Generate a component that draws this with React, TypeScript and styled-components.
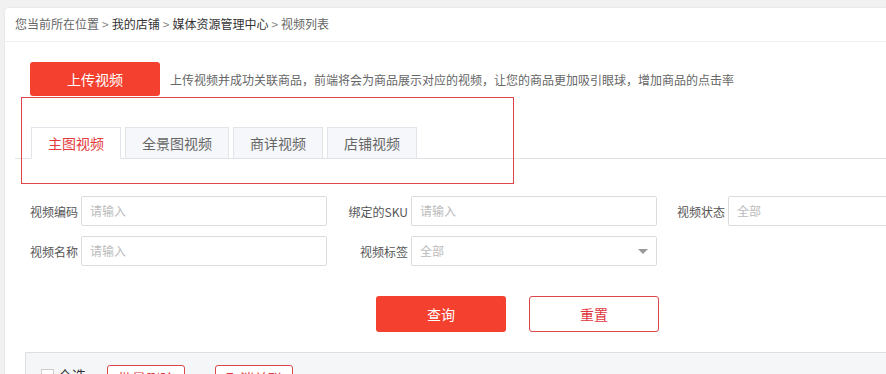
import React from "react";
import styled, { createGlobalStyle } from "styled-components";

const Global = createGlobalStyle`
  html, body { margin: 0; padding: 0; background: #f1f1f1; overflow: hidden; }
  body { font-family: "Noto Sans CJK SC", "Liberation Sans", sans-serif; font-size: 12px; color: #333; }
  * { box-sizing: border-box; }
`;

const Page = styled.div`
  padding: 8px 0 0 5px;
  height: 374px;
`;

const Card = styled.div`
  position: relative;
  width: 920px;
  height: 400px;
  background: #fff;
  border-radius: 4px 0 0 0;
  box-shadow: 0 0 3px rgba(0, 0, 0, 0.08);
`;

const Breadcrumb = styled.div`
  height: 34px;
  line-height: 32px;
  padding-left: 10px;
  border-bottom: 1px solid #eeeeee;
  color: #666;
  font-size: 12px;
  white-space: nowrap;
`;

const Crumb = styled.span<{ $strong?: boolean }>`
  color: ${(p) => (p.$strong ? "#333" : "#666")};
`;

const Sep = styled.span`
  color: #888;
  margin: 0 3px;
`;

const UploadRow = styled.div`
  display: flex;
  align-items: center;
  padding: 20px 0 0 25px;
`;

const PrimaryButton = styled.button<{ $w: number; $h: number }>`
  width: ${(p) => p.$w}px;
  height: ${(p) => p.$h}px;
  background: #f4412f;
  color: #fff;
  border: none;
  border-radius: 3px;
  font-family: inherit;
  font-size: 14px;
  padding: 0;
`;

const OutlineButton = styled.button<{ $w: number; $h: number }>`
  width: ${(p) => p.$w}px;
  height: ${(p) => p.$h}px;
  background: #fff;
  color: #e0373c;
  border: 1px solid #d9474b;
  border-radius: 3px;
  font-family: inherit;
  font-size: 14px;
  padding: 0;
`;

const Hint = styled.span`
  margin-left: 10px;
  color: #666;
  font-size: 12px;
  white-space: nowrap;
`;

const TabBar = styled.div`
  display: flex;
  gap: 4px;
  margin: 31px 0 0 10px;
  padding-left: 16px;
  border-bottom: 1px solid #dfe2e6;
  height: 32px;
`;

const Tab = styled.div<{ $active?: boolean; $w: number }>`
  width: ${(p) => p.$w}px;
  height: 32px;
  margin-bottom: -1px;
  display: flex;
  align-items: center;
  justify-content: center;
  font-size: 14px;
  color: ${(p) => (p.$active ? "#e4393c" : "#666")};
  background: ${(p) => (p.$active ? "#fff" : "#f5f7fa")};
  border: 1px solid #e1e4e8;
  border-bottom: ${(p) => (p.$active ? "1px solid #fff" : "1px solid #dfe2e6")};
`;

const Annotation = styled.div`
  position: absolute;
  left: 16px;
  top: 89px;
  width: 493px;
  height: 87px;
  border: 1px solid #e0454c;
  pointer-events: none;
`;

const Form = styled.div`
  display: grid;
  grid-template-columns: 56px 246px 84px 246px 71px 246px;
  grid-auto-rows: 30px;
  row-gap: 10px;
  margin: 37px 0 0 20px;
  align-items: center;
`;

const Label = styled.label`
  text-align: right;
  padding-right: 3px;
  color: #555;
  font-size: 12px;
  white-space: nowrap;
`;

const Input = styled.div`
  position: relative;
  height: 30px;
  border: 1px solid #dcdcdc;
  border-radius: 2px;
  padding-left: 8px;
  line-height: 28px;
  color: #bbb;
  font-size: 12px;
`;

const Caret = styled.span`
  position: absolute;
  right: 8px;
  top: 12px;
  width: 0;
  height: 0;
  border-left: 5px solid transparent;
  border-right: 5px solid transparent;
  border-top: 5px solid #999;
`;

const Actions = styled.div`
  display: flex;
  gap: 23px;
  margin: 30px 0 0 371px;
`;

const BulkBar = styled.div`
  margin: 20px 0 0 20px;
  height: 60px;
  background: #f5f6f8;
  border-top: 1px solid #dcdfe4;
  border-left: 1px solid #dcdfe4;
  display: flex;
  align-items: flex-start;
  padding: 12px 0 0 15px;
`;

const Check = styled.span`
  display: inline-block;
  width: 13px;
  height: 13px;
  border: 1px solid #ccc;
  background: #fff;
  margin-top: 4px;
`;

const CheckText = styled.span`
  margin-left: 4px;
  font-size: 14px;
  color: #333;
  line-height: 20px;
`;

const SmallOutline = styled.button<{ $ml: number }>`
  margin-left: ${(p) => p.$ml}px;
  width: 78px;
  height: 26px;
  background: #fff;
  color: #e0373c;
  border: 1px solid #d9474b;
  border-radius: 3px;
  font-family: inherit;
  font-size: 14px;
  padding: 0;
`;

export default function App() {
  return (
    <>
      <Global />
      <Page>
        <Card>
          <Breadcrumb>
            <Crumb>您当前所在位置</Crumb>
            <Sep>&gt;</Sep>
            <Crumb $strong>我的店铺</Crumb>
            <Sep>&gt;</Sep>
            <Crumb $strong>媒体资源管理中心</Crumb>
            <Sep>&gt;</Sep>
            <Crumb>视频列表</Crumb>
          </Breadcrumb>
          <UploadRow>
            <PrimaryButton $w={130} $h={34}>上传视频</PrimaryButton>
            <Hint>上传视频并成功关联商品，前端将会为商品展示对应的视频，让您的商品更加吸引眼球，增加商品的点击率</Hint>
          </UploadRow>
          <TabBar>
            <Tab $active $w={90}>主图视频</Tab>
            <Tab $w={104}>全景图视频</Tab>
            <Tab $w={90}>商详视频</Tab>
            <Tab $w={90}>店铺视频</Tab>
          </TabBar>
          <Annotation />
          <Form>
            <Label>视频编码</Label>
            <Input>请输入</Input>
            <Label>绑定的SKU</Label>
            <Input>请输入</Input>
            <Label>视频状态</Label>
            <Input>全部</Input>
            <Label>视频名称</Label>
            <Input>请输入</Input>
            <Label>视频标签</Label>
            <Input>
              全部
              <Caret />
            </Input>
          </Form>
          <Actions>
            <PrimaryButton $w={130} $h={36}>查询</PrimaryButton>
            <OutlineButton $w={130} $h={36}>重置</OutlineButton>
          </Actions>
          <BulkBar>
            <Check />
            <CheckText>全选</CheckText>
            <SmallOutline $ml={21}>批量删除</SmallOutline>
            <SmallOutline $ml={30}>取消关联</SmallOutline>
          </BulkBar>
        </Card>
      </Page>
    </>
  );
}
